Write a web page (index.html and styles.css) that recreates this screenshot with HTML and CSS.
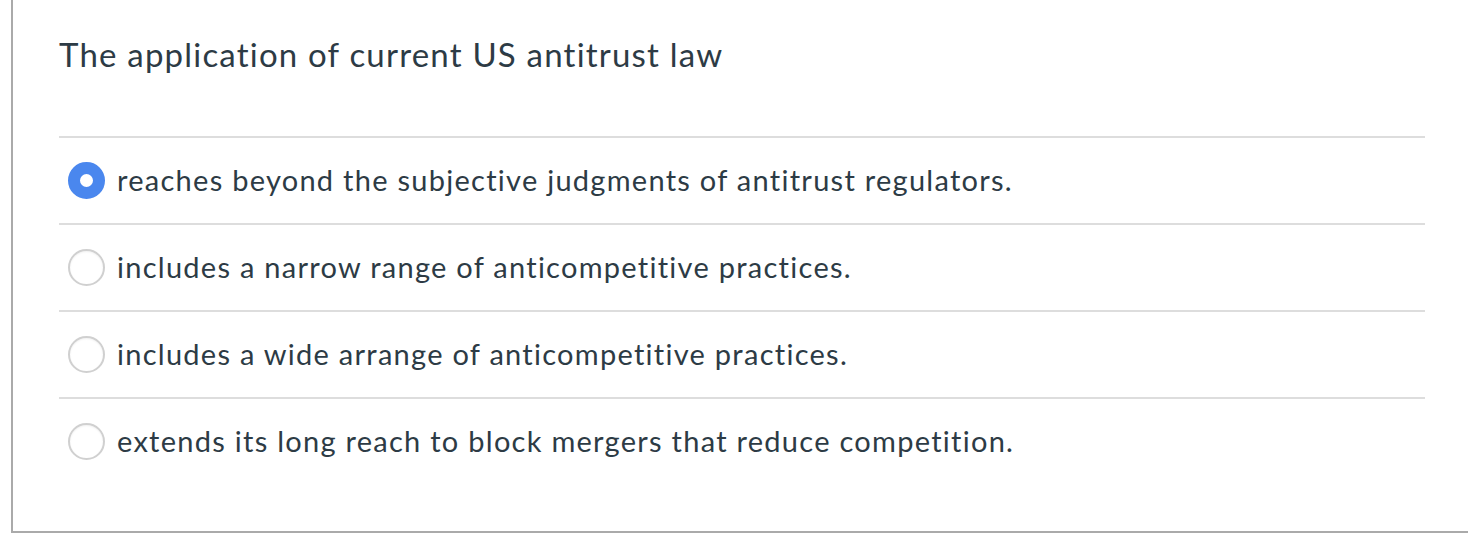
FILE: index.html
```html
<!DOCTYPE html>
<html lang="en">
<head>
  <meta charset="UTF-8" />
  <meta name="viewport" content="width=device-width, initial-scale=1.0"/>
  <title>Quiz Question</title>
  <link rel="stylesheet" href="styles.css">
</head>
<body>

<section class="question">
  <div class="question-text">The application of current US antitrust law</div>
  <div class="answers">
    <label class="answer">
      <input type="radio" name="q1" checked />
      <span class="radio"></span>
      <span class="answer-text">reaches beyond the subjective judgments of antitrust regulators.</span>
    </label>
    <label class="answer">
      <input type="radio" name="q1" />
      <span class="radio"></span>
      <span class="answer-text">includes a narrow range of anticompetitive practices.</span>
    </label>
    <label class="answer">
      <input type="radio" name="q1" />
      <span class="radio"></span>
      <span class="answer-text">includes a wide arrange of anticompetitive practices.</span>
    </label>
    <label class="answer">
      <input type="radio" name="q1" />
      <span class="radio"></span>
      <span class="answer-text">extends its long reach to block mergers that reduce competition.</span>
    </label>
  </div>
</section>

</body>
</html>
```

FILE: styles.css
```css
body {
  margin: 0;
  overflow: hidden;
  background: #fff;
  font-family: Lato, "Open Sans", sans-serif;
  font-variant-ligatures: none;
  color: #2d3b45;
}

.question {
  box-sizing: border-box;
  height: 533px;
  width: 1520px;
  margin-left: 11px;
  padding-left: 46px;
  border-left: 2px solid #aaa;
  border-bottom: 2px solid #aaa;
}

.question-text {
  font-size: 33px;
  letter-spacing: 1.2px;
  line-height: 40px;
  padding-top: 34px;
}

.answers {
  width: 1366px;
  margin-top: 62px;
}

.answer {
  display: flex;
  align-items: center;
  gap: 12px;
  height: 87px;
  padding-left: 9px;
  padding-bottom: 2px;
  border-top: 2px solid #ddd;
  box-sizing: border-box;
  font-size: 29px;
  letter-spacing: 1.27px;
  cursor: pointer;
}

.answer input {
  display: none;
}

.radio {
  box-sizing: border-box;
  width: 37px;
  height: 37px;
  margin-top: 2px;
  flex-shrink: 0;
  border-radius: 50%;
  border: 2px solid #d0d0d0;
  box-shadow: inset 0 1px 2px rgba(0, 0, 0, 0.06);
  background: #fff;
}

.answer input:checked + .radio {
  border: 12px solid #4a87ee;
  box-shadow: none;
}
```
